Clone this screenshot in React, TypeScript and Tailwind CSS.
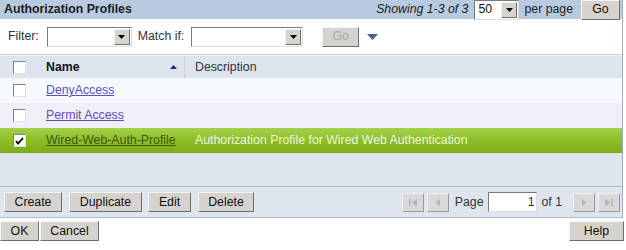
import React from "react";

const rows = [
  { name: "DenyAccess", desc: "", bg: "bg-[#f5f9fd]", checked: false },
  { name: "Permit Access", desc: "", bg: "bg-[#f0eff8]", checked: false },
  {
    name: "Wired-Web-Auth-Profile",
    desc: "Authorization Profile for Wired Web Authentication",
    bg: "bg-gradient-to-b from-[#a6d04a] via-[#8cbe27] to-[#7aad17]",
    checked: true,
  },
];

function Btn({ label, className = "", disabled = false }: { label: string; className?: string; disabled?: boolean }) {
  return (
    <button
      className={`h-[20px] bg-[#d6d3ce] border border-t-[#f4f4f4] border-l-[#f4f4f4] border-r-[#6e6e6e] border-b-[#6e6e6e] text-[12.3px] leading-none ${disabled ? "text-[#a9a9a9]" : "text-[#111]"} ${className}`}
    >
      {label}
    </button>
  );
}

function Select({ w, value = "" }: { w: string; value?: string }) {
  return (
    <div className={`${w} h-[20px] bg-white border border-t-[#7a7a7a] border-l-[#7a7a7a] border-r-[#dcdcdc] border-b-[#dcdcdc] flex items-center`}>
      <span className="flex-1 pl-[3px] text-[12.3px] text-[#111] leading-none">{value}</span>
      <span className="w-[16px] h-[16px] mr-[1px] bg-[#d6d3ce] border border-t-[#f4f4f4] border-l-[#f4f4f4] border-r-[#6e6e6e] border-b-[#6e6e6e] flex items-center justify-center">
        <svg width="7" height="4" viewBox="0 0 7 4"><path d="M0 0h7L3.5 4z" fill="#000" /></svg>
      </span>
    </div>
  );
}

function Check({ checked }: { checked: boolean }) {
  return (
    <span className="w-[13px] h-[13px] bg-white border border-t-[#808080] border-l-[#808080] border-r-[#e0e0e0] border-b-[#e0e0e0] flex items-center justify-center">
      {checked && (
        <svg width="9" height="8" viewBox="0 0 9 8"><path d="M1 4l2 2.5L8 1" stroke="#000" strokeWidth="1.8" fill="none" /></svg>
      )}
    </span>
  );
}

function NavBtn({ d }: { d: string }) {
  return (
    <span className="w-[22px] h-[19px] bg-[#d9d9d9] border border-t-[#f0f0f0] border-l-[#f0f0f0] border-r-[#9a9a9a] border-b-[#9a9a9a] flex items-center justify-center">
      <svg width="10" height="9" viewBox="0 0 10 9"><path d={d} fill="#b5b5b5" /></svg>
    </span>
  );
}

export default function App() {
  return (
    <div className="w-[626px] h-[250px] bg-white font-['Liberation_Sans',Arial,sans-serif] text-[12.3px] text-[#333] overflow-hidden">
      <div className="w-[623px] border-r border-[#9fb0c5]">
        {/* title bar */}
        <div className="h-[19px] bg-[#b8cadf] flex items-center pl-[4px] pr-[2px]">
          <span className="font-bold text-[#1c1c1c]">Authorization Profiles</span>
          <span className="ml-auto italic text-[#1c1c1c] mr-[6px]">Showing 1-3 of 3</span>
          <Select w="w-[45px]" value="50" />
          <span className="ml-[5px] mr-[8px] text-[#1c1c1c]">per page</span>
          <Btn label="Go" className="w-[39px] h-[18px]" />
        </div>

        {/* filter row */}
        <div className="h-[36px] flex items-center pl-[8px] border-b border-[#c3cedb]">
          <span className="mr-[8px]">Filter:</span>
          <Select w="w-[85px]" />
          <span className="ml-[6px] mr-[7px]">Match if:</span>
          <Select w="w-[112px]" />
          <Btn label="Go" className="ml-[19px] w-[37px]" disabled />
          <svg className="ml-[8px]" width="11" height="6" viewBox="0 0 11 6"><path d="M0 0h11L5.5 6z" fill="#4a5f94" /></svg>
        </div>

        {/* table header */}
        <div className="h-[23px] bg-[#dde4ee] flex items-center border-t border-[#eef2f7]">
          <span className="w-[36px] flex justify-center pl-[2px]"><Check checked={false} /></span>
          <span className="w-[148px] pl-[10px] flex items-center pr-[7px]">
            <span className="font-bold text-[#111]">Name</span>
            <svg className="ml-auto" width="7" height="4" viewBox="0 0 7 4"><path d="M3.5 0L7 4H0z" fill="#1a2a80" /></svg>
          </span>
          <span className="h-full border-l border-[#c7cfdc]" />
          <span className="pl-[10px]">Description</span>
        </div>

        {/* rows */}
        {rows.map((r) => (
          <div key={r.name} className={`h-[25px] flex items-center ${r.bg}`}>
            <span className="w-[36px] flex justify-center pl-[2px]"><Check checked={r.checked} /></span>
            <span className="w-[148px] pl-[10px]">
              <span className={`underline ${r.checked ? "text-[#3d5a12]" : "text-[#5b4fb8]"}`}>{r.name}</span>
            </span>
            <span className={`pl-[11px] ${r.checked ? "text-[#eef7dc]" : ""}`}>{r.desc}</span>
          </div>
        ))}

        {/* empty area */}
        <div className="h-[34px] bg-[#dfe5ef] border-b border-[#aab8ca]" />

        {/* action bar */}
        <div className="h-[31px] bg-[#dfe5ef] flex items-center pl-[4px] pr-[2px] border-b border-[#aab8ca]">
          <Btn label="Create" className="w-[58px]" />
          <Btn label="Duplicate" className="ml-[7px] w-[73px]" />
          <Btn label="Edit" className="ml-[6px] w-[43px]" />
          <Btn label="Delete" className="ml-[7px] w-[56px]" />
          <div className="ml-auto flex items-center">
            <NavBtn d="M1 1h1.5v7H1zM9 1v7L3.5 4.5z" />
            <span className="ml-[3px]"><NavBtn d="M7 1v7L2.5 4.5z" /></span>
            <span className="ml-[6px] mr-[5px]">Page</span>
            <div className="w-[49px] h-[20px] bg-white border border-t-[#7a7a7a] border-l-[#7a7a7a] border-r-[#dcdcdc] border-b-[#dcdcdc] text-right pr-[2px] leading-[18px]">1</div>
            <span className="ml-[4px] mr-[11px]">of 1</span>
            <NavBtn d="M3 1v7L7.5 4.5z" />
            <span className="ml-[3px]"><NavBtn d="M1 1v7L6.5 4.5zM7.5 1H9v7H7.5z" /></span>
          </div>
        </div>
      </div>

      {/* bottom buttons */}
      <div className="h-[26px] flex items-center pr-[2px]">
        <Btn label="OK" className="w-[39px]" />
        <Btn label="Cancel" className="ml-[1px] w-[59px]" />
        <Btn label="Help" className="ml-auto w-[55px]" />
      </div>
    </div>
  );
}
